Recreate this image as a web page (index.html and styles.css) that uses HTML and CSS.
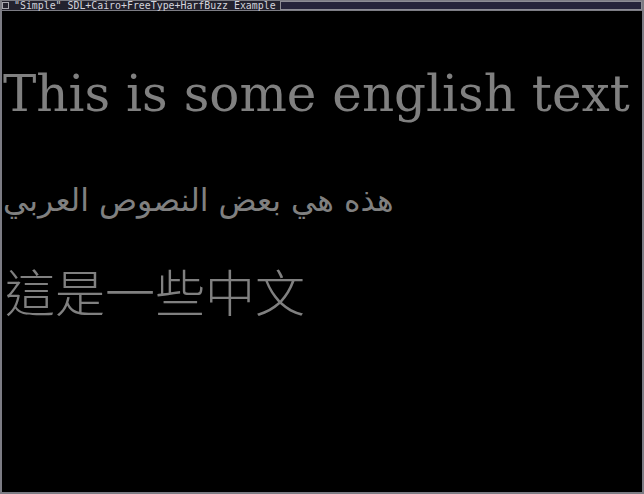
FILE: index.html
```html
<!DOCTYPE html>
<html>
<head>
<meta charset="utf-8">
<link rel="stylesheet" href="styles.css">
</head>
<body>
<div class="window">
  <div class="titlebar">
    <span class="close-box"></span>
    <span class="title">"Simple" SDL+Cairo+FreeType+HarfBuzz Example</span>
    <span class="title-fill"></span>
  </div>
  <div class="content">
    <div class="line english">This is some english text</div>
    <div class="line arabic" dir="rtl">هذه هي بعض النصوص العربي</div>
    <div class="line chinese">這是一些中文</div>
  </div>
</div>
</body>
</html>
```
FILE: styles.css
```css
html, body {
  margin: 0;
  padding: 0;
  background: #000;
}
.window {
  width: 644px;
  height: 494px;
  box-sizing: border-box;
  border: 2px solid #7c7c84;
  border-top: none;
  display: flex;
  flex-direction: column;
  background: #000;
  overflow: hidden;
}
.titlebar {
  height: 11px;
  box-sizing: border-box;
  display: flex;
  align-items: center;
  gap: 4px;
  background: #23222e;
  border-top: 1px solid #7c7c84;
  border-bottom: 1px solid #7c7c84;
}
.close-box {
  width: 7px;
  height: 7px;
  box-sizing: border-box;
  border: 1px solid #a8a8b0;
  flex: none;
}
.title {
  font-family: "DejaVu Sans Mono", monospace;
  font-size: 9.9px;
  line-height: 9px;
  color: #d4d4dc;
  white-space: nowrap;
  padding-left: 1px;
}
.title-fill {
  flex: 1;
  height: 9px;
  box-sizing: border-box;
  border: 1px solid #8c8c94;
  background: #25243a;
}
.content {
  flex: 1;
  display: flex;
  flex-direction: column;
  padding: 0 0 0 1px;
}
.line {
  color: #808080;
  white-space: nowrap;
}
.english {
  font-family: "DejaVu Serif", serif;
  font-size: 50px;
  line-height: 60px;
  margin-top: 53px;
}
.arabic {
  font-family: "DejaVu Sans", sans-serif;
  font-size: 31.5px;
  line-height: 40px;
  margin-top: 56px;
  align-self: flex-start;
}
.chinese {
  font-family: "Noto Sans CJK TC", "Noto Sans CJK SC", sans-serif;
  font-weight: 300;
  font-size: 50px;
  line-height: 60px;
  margin-top: 40px;
  padding-left: 2px;
}
```
